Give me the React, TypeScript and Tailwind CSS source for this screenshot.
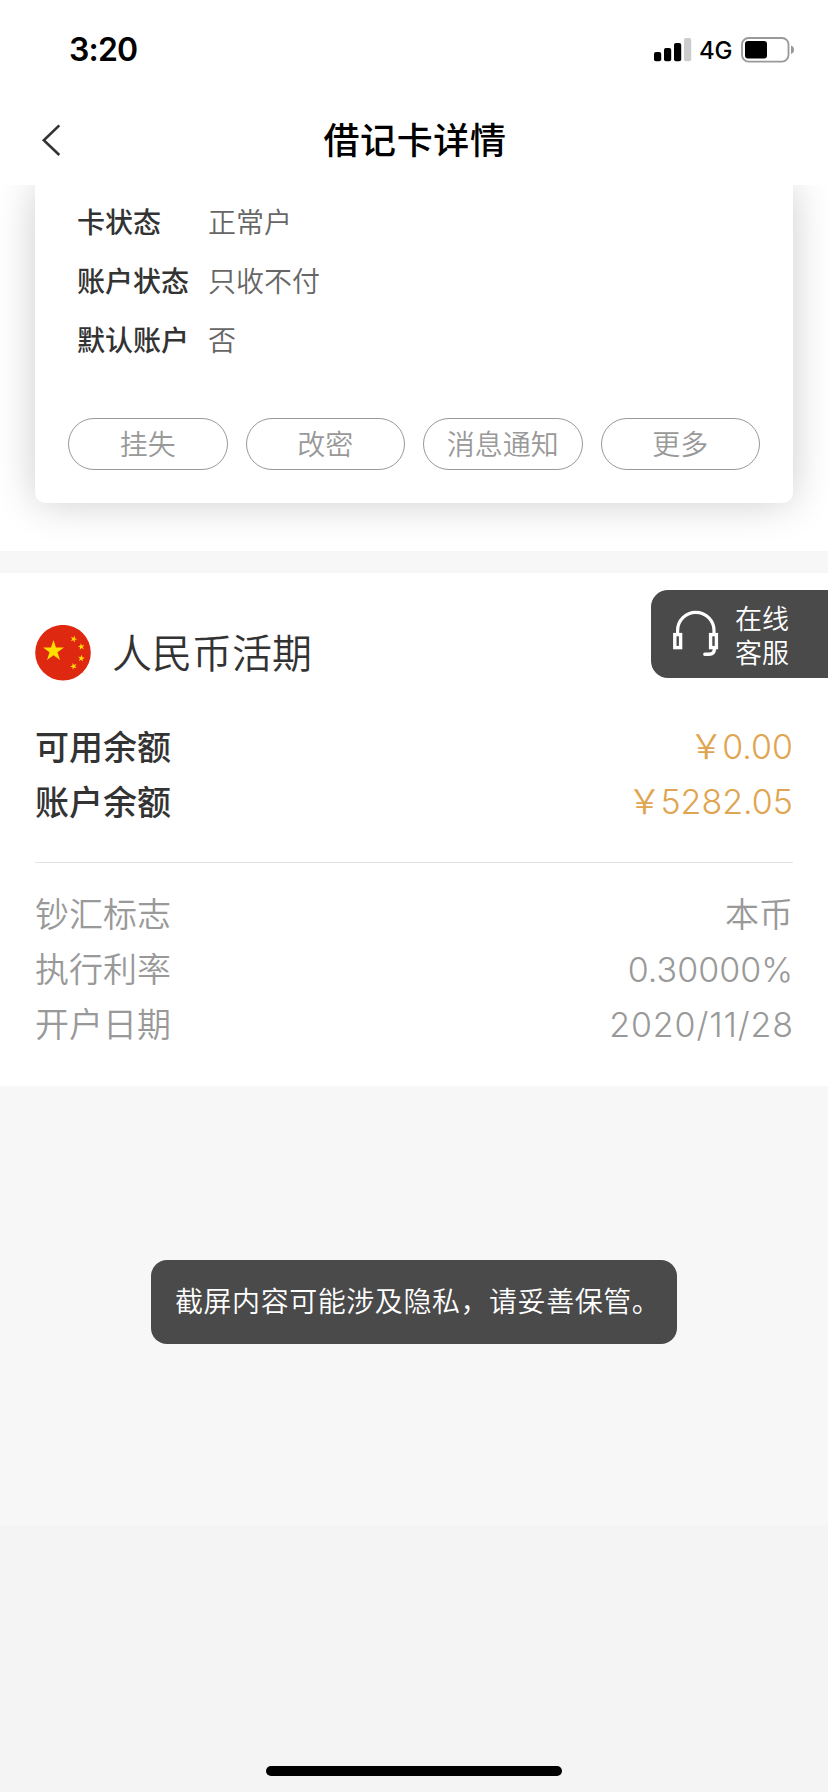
const details = [
  { label: "卡状态", value: "正常户" },
  { label: "账户状态", value: "只收不付" },
  { label: "默认账户", value: "否" },
];

const actions = ["挂失", "改密", "消息通知", "更多"];

const balances = [
  { label: "可用余额", value: "0.00" },
  { label: "账户余额", value: "5282.05" },
];

const facts = [
  { label: "钞汇标志", value: "本币", spacing: "" },
  { label: "执行利率", value: "0.30000%", spacing: "" },
  { label: "开户日期", value: "2020/11/28", spacing: "tracking-[0.9px] -mr-[1px]" },
];

function StatusBar() {
  return (
    <div className="flex h-[88px] items-center justify-between pt-3 pr-[33px] pl-[69px]">
      <span className="text-[32px] leading-none font-semibold tracking-[-0.8px] text-black">3:20</span>
      <div className="flex items-center">
        <svg width="38" height="24" viewBox="0 0 38 24">
          <rect x="0" y="14" width="7.2" height="9.2" rx="2" fill="#000" />
          <rect x="10" y="10" width="7.2" height="13.2" rx="2" fill="#000" />
          <rect x="20" y="5" width="7.2" height="18.2" rx="2" fill="#000" />
          <rect x="30" y="0" width="7.2" height="23.2" rx="2" fill="#ccc" />
        </svg>
        <span className="mt-[2px] mr-[8px] ml-[7px] w-[34px] text-[24px] leading-none font-[450] tracking-[-0.3px] text-black">4G</span>
        <svg width="54" height="26" viewBox="0 0 54 26">
          <rect x="1" y="1" width="46.5" height="23.6" rx="6.5" fill="none" stroke="#999" strokeWidth="1.8" />
          <rect x="4" y="4" width="22" height="17.4" rx="3" fill="#000" />
          <path d="M50 8.600c2 .6 3 2.200 3 4.200s-1 3.600-3 4.200z" fill="#999" />
        </svg>
      </div>
    </div>
  );
}

function Header() {
  return (
    <div className="grid h-[97px] grid-cols-[160px_1fr_160px] items-center">
      <svg className="mt-[7px] ml-[41px]" width="22" height="34" viewBox="0 0 22 34">
        <path d="M18.300 2.400L2.800 17.200L18.300 32" fill="none" stroke="#333" strokeWidth="2.600" />
      </svg>
      <h1 className="mt-[8px] pl-[2px] text-center text-[36px] leading-[44px] font-medium tracking-[0.6px] text-black">借记卡详情</h1>
    </div>
  );
}

function Flag() {
  const star = "M0-1L.2245-.309L.951-.309L.3633.118L.5878.809L0 .382L-.5878.809L-.3633.118L-.951-.309L-.2245-.309Z";
  return (
    <svg width="56" height="56" viewBox="0 0 56 56">
      <circle cx="28" cy="27.700" r="27.800" fill="#df2810" />
      <g fill="#ffde00">
        <path d={star} transform="translate(18.500 26) scale(11)" />
        <path d={star} transform="translate(38.700 14) rotate(20) scale(3.600)" />
        <path d={star} transform="translate(46.300 21.700) rotate(-10) scale(3.600)" />
        <path d={star} transform="translate(46.300 33.300) rotate(8) scale(3.600)" />
        <path d={star} transform="translate(38.700 41.300) rotate(-20) scale(3.600)" />
      </g>
    </svg>
  );
}

function Headset() {
  return (
    <svg width="46" height="48" viewBox="0 0 46 48" fill="none" stroke="#fff">
      <path d="M4.600 24V20.500a18.200 18.200 0 0 1 36.400 0V24" strokeWidth="3.200" />
      <rect x="1.800" y="24.600" width="5.800" height="13" strokeWidth="3.400" />
      <rect x="37.600" y="24.600" width="5.800" height="13" strokeWidth="3.400" />
      <path d="M41.400 38v1c0 3.600-2 5.200-5.400 5.200h-4.200" strokeWidth="3.400" strokeLinecap="round" />
    </svg>
  );
}

export default function App() {
  return (
    <div className="relative flex h-[1792px] w-[828px] flex-col overflow-hidden bg-[#f7f7f7] font-['Inter','Noto_Sans_CJK_SC',sans-serif]">
      <header className="bg-white">
        <StatusBar />
        <Header />
      </header>

      <section className="h-[366px] shrink-0 overflow-hidden bg-white px-[35px]">
        <div className="flex h-[318px] flex-col rounded-b-[10px] bg-white px-[33px] pt-[9px] shadow-[0_0_40px_rgba(0,0,0,0.2)]">
          <dl className="flex flex-col pl-[9px] text-[28px] leading-[59px]">
            {details.map((d) => (
              <div key={d.label} className="flex">
                <dt className="w-[131px] font-medium text-[#333]">{d.label}</dt>
                <dd className="font-[350] text-[#666]">{d.value}</dd>
              </div>
            ))}
          </dl>
          <div className="mt-[47px] grid grid-cols-4 gap-[18px]">
            {actions.map((a) => (
              <button
                key={a}
                className="h-[52px] rounded-full border border-[#999] pt-[2px] text-[28px] leading-[48px] font-[350] text-[#999]"
              >
                {a}
              </button>
            ))}
          </div>
        </div>
      </section>

      <section className="mt-[22px] h-[513px] shrink-0 bg-white px-[35px] pt-[52px]">
        <div className="flex h-[56px] items-center gap-[21px]">
          <Flag />
          <h2 className="mt-[2px] text-[40px] leading-[56px] font-[350] text-[#333]">人民币活期</h2>
        </div>
        <dl className="mt-[39px] text-[34px] leading-[55px]">
          {balances.map((b) => (
            <div key={b.label} className="flex justify-between">
              <dt className="font-medium text-[#333]">{b.label}</dt>
              <dd className="-mt-px flex font-light text-[#e0a550]">
                <span className="-mr-px font-[350]">￥</span>
                <span>{b.value}</span>
              </dd>
            </div>
          ))}
        </dl>
        <hr className="mt-[32px] border-t border-[#e2e2e2]" />
        <dl className="mt-[24px] text-[34px] leading-[55px] font-[350] text-[#999]">
          {facts.map((f) => (
            <div key={f.label} className="flex justify-between">
              <dt>{f.label}</dt>
              <dd className={f.spacing}>{f.value}</dd>
            </div>
          ))}
        </dl>
      </section>

      <div className="mt-[440px] flex flex-1 items-end justify-center bg-[#f4f4f4] pb-4">
        <div className="h-[10px] w-[296px] rounded-full bg-black" />
      </div>

      <aside className="absolute top-[590px] right-0 flex h-[88px] w-[177px] items-center rounded-l-[17px] bg-[#4a4a4a] pl-[22px]">
        <Headset />
        <p className="mt-[5px] ml-[16px] w-[56px] text-[27px] leading-[34px] font-[350] text-white">
          在线
          <br />
          客服
        </p>
      </aside>

      <div className="absolute top-[1260px] left-[151px] flex h-[84px] w-[526px] items-center rounded-[16px] bg-[#4a4a4a] pl-[24px] text-[28px] leading-[84px] font-[350] tracking-[0.55px] whitespace-nowrap text-white">
        截屏内容可能涉及隐私，请妥善保管。
      </div>
    </div>
  );
}
